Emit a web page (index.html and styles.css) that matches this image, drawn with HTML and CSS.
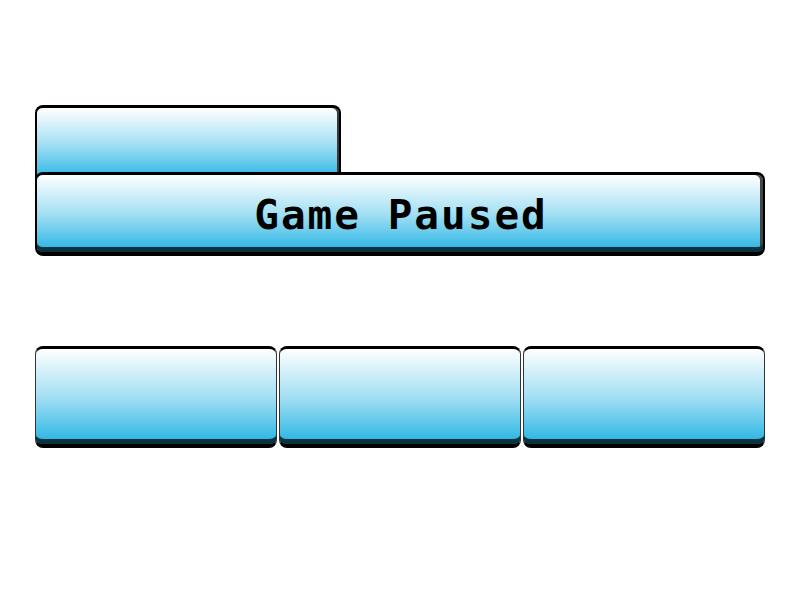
FILE: index.html
```html
<!DOCTYPE html>
<html>
<head>
<meta charset="utf-8">
<link rel="stylesheet" href="styles.css">
</head>
<body>
<div class="screen">
  <div class="tab"></div>
  <div class="banner"><span class="title">Game Paused</span></div>
  <div class="row">
    <div class="btn"></div>
    <div class="btn"></div>
    <div class="btn"></div>
  </div>
</div>
</body>
</html>
```
FILE: styles.css
```css
html, body {
  margin: 0;
  padding: 0;
  background: #ffffff;
}
.screen {
  width: 800px;
  height: 600px;
  box-sizing: border-box;
  padding: 105px 35px 0 35px;
  display: flex;
  flex-direction: column;
}
.tab, .banner, .btn {
  box-sizing: border-box;
  background: linear-gradient(to bottom, #ffffff 0%, #d6f1fa 22%, #a4e0f3 50%, #66caec 75%, #25b3e3 100%);
  border: 2px solid #000;
  border-top-width: 3px;
  border-bottom-width: 4px;
  border-radius: 8px;
}
.tab {
  width: 306px;
  height: 75px;
  border-bottom: none;
  border-radius: 8px 8px 0 0;
  box-shadow: inset -2px 0 0 #3a3a3a;
}
.banner {
  position: relative;
  margin-top: -8px;
  height: 84px;
  display: flex;
  align-items: center;
  justify-content: center;
  box-shadow: inset 0 -5px 0 #0e323d, inset -3px 0 0 #444;
}
.title {
  font-family: "DejaVu Sans Mono", monospace;
  font-weight: bold;
  font-size: 41px;
  letter-spacing: 2px;
  color: #000;
  padding-left: 2px;
  margin-top: 2px;
}
.row {
  margin-top: 90px;
  display: flex;
  gap: 2px;
}
.btn {
  flex: 1;
  height: 102px;
  border-width: 3px 1.5px 4px 1.5px;
  border-color: #000 #333 #000 #333;
  box-shadow: inset 0 -5px 0 #0e323d;
}
```
